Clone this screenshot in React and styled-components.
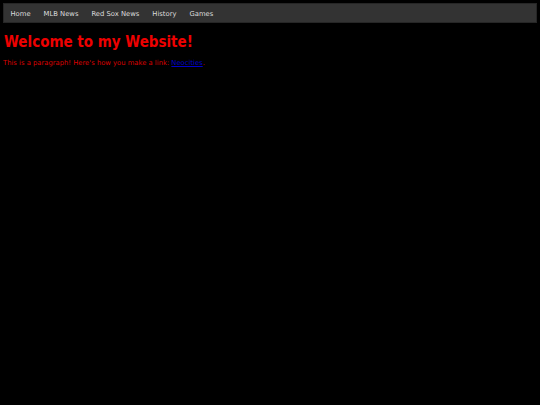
import React from 'react'
import styled, { createGlobalStyle } from 'styled-components'

const GlobalStyle = createGlobalStyle`
  html, body {
    margin: 0;
    padding: 0;
    background: #000;
  }
  body {
    padding: 3px;
    font-family: 'DejaVu Sans', Verdana, sans-serif;
    color: #f00;
  }
`

const NavBar = styled.nav`
  display: flex;
  align-items: center;
  height: 20px;
  padding-top: 1px;
  background: #333;
  border: 1px solid #262626;
  box-sizing: border-box;
`

const NavLink = styled.a`
  padding: 0 6.5px;
  font-size: 6.8px;
  color: #ddd;
  text-decoration: none;
`

const Heading = styled.h1`
  margin: 10px 0 0 1px;
  font-size: 15px;
  font-stretch: condensed;
  font-weight: bold;
  color: #e00;
`

const Paragraph = styled.p`
  margin: 8px 0 0;
  font-size: 6.8px;
  color: #d00;
`

const Link = styled.a`
  color: #00c;
  text-decoration: underline;
`

const links = ['Home', 'MLB News', 'Red Sox News', 'History', 'Games']

const App = () => (
  <>
    <GlobalStyle />
    <NavBar>
      {links.map(name => (
        <NavLink key={name} href='#'>{name}</NavLink>
      ))}
    </NavBar>
    <Heading>Welcome to my Website!</Heading>
    <Paragraph>
      This is a paragraph! Here's how you make a link: <Link href='#'>Neocities</Link>.
    </Paragraph>
  </>
)

export default App
